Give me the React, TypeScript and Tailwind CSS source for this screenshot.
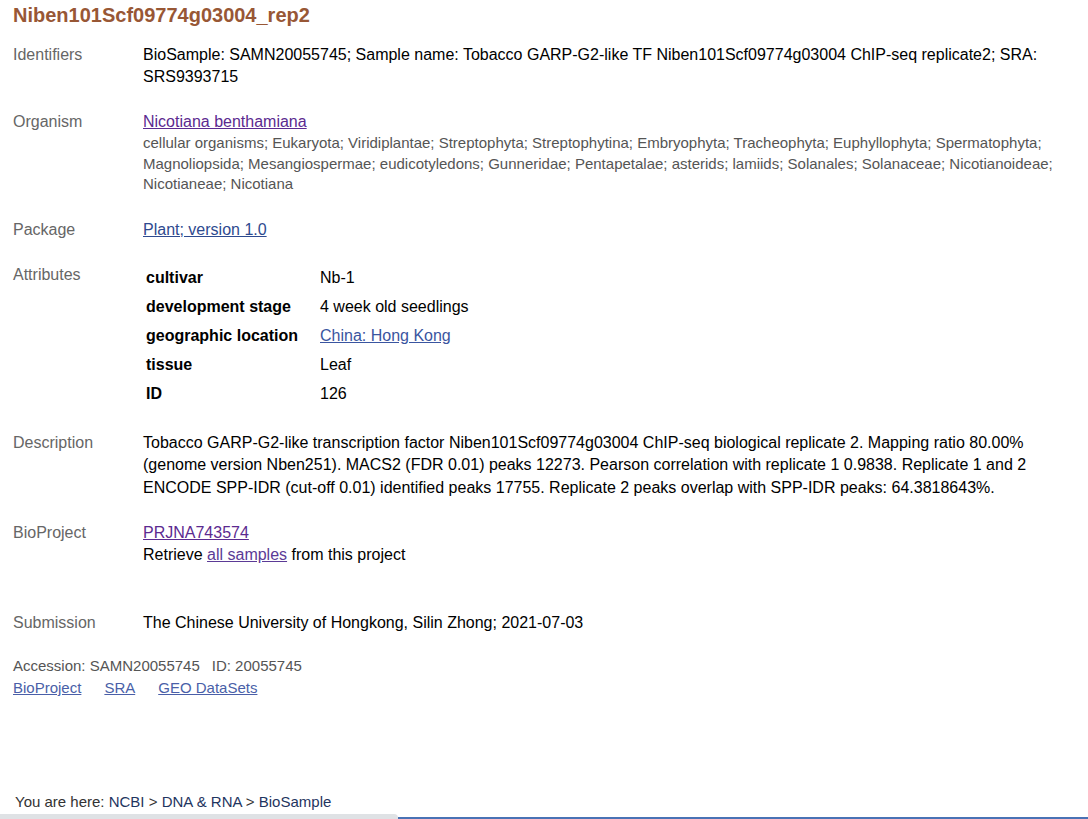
import React from 'react';

const Label = ({ children }: { children: React.ReactNode }) => (
  <div className="w-[143px] shrink-0 pl-[13px] text-[#666] leading-[22px]">{children}</div>
);

const attributes: [string, React.ReactNode][] = [
  ['cultivar', 'Nb-1'],
  ['development stage', '4 week old seedlings'],
  [
    'geographic location',
    <a href="#" className="text-[#3a55a0] underline">
      China: Hong Kong
    </a>,
  ],
  ['tissue', 'Leaf'],
  ['ID', '126'],
];

export default function App() {
  return (
    <div className="bg-white w-[1088px] h-[819px] overflow-hidden flex flex-col font-['Liberation_Sans',Arial,sans-serif] text-[16px] text-black">
      {/* Title */}
      <h1 className="pl-[13px] pt-[3px] text-[20px] leading-[24px] font-bold text-[#985735]">
        Niben101Scf09774g03004_rep2
      </h1>

      {/* Identifiers */}
      <div className="flex mt-[17px]">
        <Label>Identifiers</Label>
        <div className="w-[940px] leading-[22px]">
          BioSample: SAMN20055745; Sample name: Tobacco GARP-G2-like TF Niben101Scf09774g03004 ChIP-seq replicate2; SRA:
          SRS9393715
        </div>
      </div>

      {/* Organism */}
      <div className="flex mt-[23px]">
        <Label>Organism</Label>
        <div className="w-[940px]">
          <div className="leading-[22px]">
            <a href="#" className="text-[#5b2a90] underline">
              Nicotiana benthamiana
            </a>
          </div>
          <div className="text-[15px] leading-[20.5px] text-[#555]">
            cellular organisms; Eukaryota; Viridiplantae; Streptophyta; Streptophytina; Embryophyta; Tracheophyta;
            Euphyllophyta; Spermatophyta; Magnoliopsida; Mesangiospermae; eudicotyledons; Gunneridae; Pentapetalae;
            asterids; lamiids; Solanales; Solanaceae; Nicotianoideae; Nicotianeae; Nicotiana
          </div>
        </div>
      </div>

      {/* Package */}
      <div className="flex mt-[24px]">
        <Label>Package</Label>
        <div className="leading-[22px]">
          <a href="#" className="text-[#2e4a8f] underline">
            Plant; version 1.0
          </a>
        </div>
      </div>

      {/* Attributes */}
      <div className="flex mt-[22px]">
        <Label>
          <div className="pt-[1px]">Attributes</div>
        </Label>
        <div className="grid grid-cols-[174px_1fr] pl-[3px]">
          {attributes.map(([k, v]) => (
            <React.Fragment key={k}>
              <div className="font-bold leading-[29px]">{k}</div>
              <div className="leading-[29px]">{v}</div>
            </React.Fragment>
          ))}
        </div>
      </div>

      {/* Description */}
      <div className="flex mt-[24px]">
        <Label>Description</Label>
        <div className="w-[940px] leading-[22.5px]">
          Tobacco GARP-G2-like transcription factor Niben101Scf09774g03004 ChIP-seq biological replicate 2. Mapping ratio
          80.00% (genome version Nben251). MACS2 (FDR 0.01) peaks 12273. Pearson correlation with replicate 1 0.9838.
          Replicate 1 and 2 ENCODE SPP-IDR (cut-off 0.01) identified peaks 17755. Replicate 2 peaks overlap with SPP-IDR
          peaks: 64.3818643%.
        </div>
      </div>

      {/* BioProject */}
      <div className="flex mt-[23px]">
        <Label>BioProject</Label>
        <div className="leading-[22px]">
          <div>
            <a href="#" className="text-[#5b2a90] underline">
              PRJNA743574
            </a>
          </div>
          <div>
            Retrieve{' '}
            <a href="#" className="text-[#5b3a96] underline">
              all samples
            </a>{' '}
            from this project
          </div>
        </div>
      </div>

      {/* Submission */}
      <div className="flex mt-[46px]">
        <Label>Submission</Label>
        <div className="leading-[22px]">The Chinese University of Hongkong, Silin Zhong; 2021-07-03</div>
      </div>

      {/* Accession */}
      <div className="pl-[13px] mt-[21px] text-[15px] leading-[22px] text-[#555]">
        <div>
          Accession: SAMN20055745<span className="ml-[12px]">ID: 20055745</span>
        </div>
        <div className="flex gap-[23px]">
          <a href="#" className="text-[#4a5fa8] underline">
            BioProject
          </a>
          <a href="#" className="text-[#4a5fa8] underline">
            SRA
          </a>
          <a href="#" className="text-[#4a5fa8] underline">
            GEO DataSets
          </a>
        </div>
      </div>

      {/* Footer */}
      <div className="mt-auto">
        <div className="pl-[15px] text-[15px] leading-[20px] text-[#333]">
          You are here: <span className="text-[#1f3560]">NCBI</span> &gt;{' '}
          <span className="text-[#1f3560]">DNA &amp; RNA</span> &gt; <span className="text-[#1f3560]">BioSample</span>
        </div>
        <div className="flex items-end mt-[2px] h-[5px]">
          <div className="w-[398px] h-[5px] bg-[#dfe2e5] rounded-tr-[4px]" />
          <div className="flex-1 h-[2px] bg-[#4a72b5]" />
        </div>
      </div>
    </div>
  );
}
